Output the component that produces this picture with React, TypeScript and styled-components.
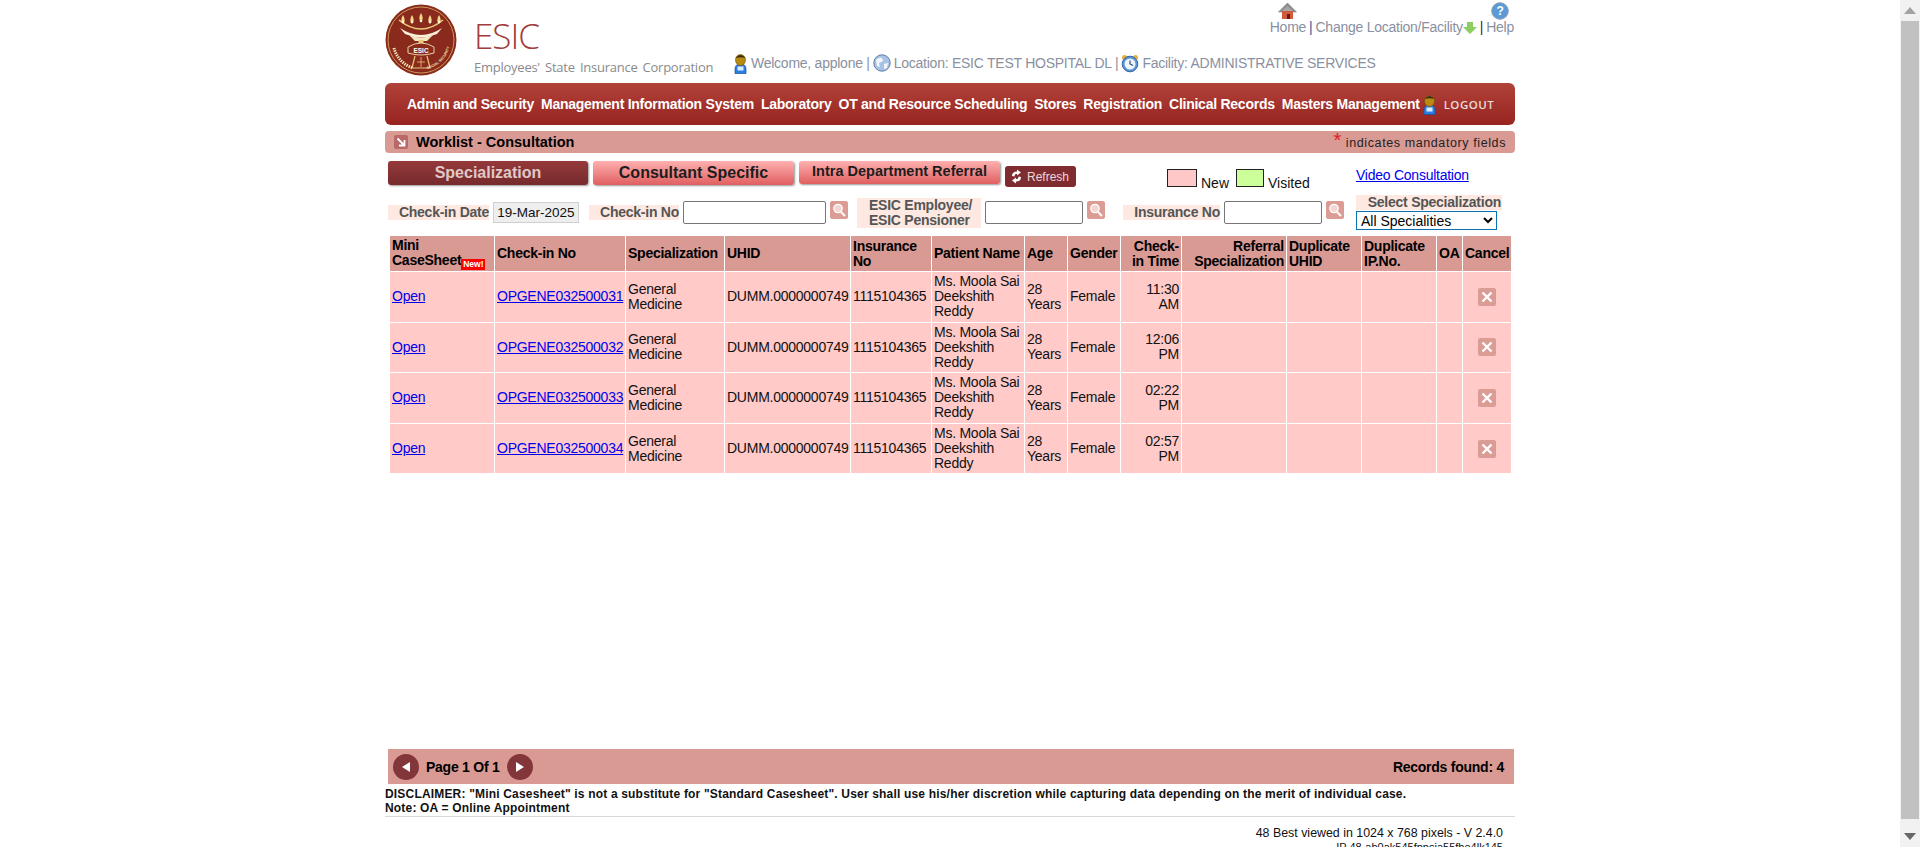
import React from 'react';
import styled, { createGlobalStyle } from 'styled-components';

const GlobalStyle = createGlobalStyle`
  html, body {
    margin: 0;
    padding: 0;
    height: 100%;
    overflow: hidden;
    background: #fff;
    font-family: "Liberation Sans", Arial, sans-serif;
  }
`;

const rows = [
  { no: 'OPGENE032500031', time: '11:30 AM' },
  { no: 'OPGENE032500032', time: '12:06 PM' },
  { no: 'OPGENE032500033', time: '02:22 PM' },
  { no: 'OPGENE032500034', time: '02:57 PM' },
];
const colWidths = [104, 130, 98, 125, 80, 92, 42, 52, 60, 104, 74, 74, 25, 48];
const navItems = [
  'Admin and Security',
  'Management Information System',
  'Laboratory',
  'OT and Resource Scheduling',
  'Stores',
  'Registration',
  'Clinical Records',
  'Masters Management',
];

const Logo = () => (
  <svg width="72" height="72" viewBox="0 0 72 72">
    <circle cx="36" cy="36" r="35.5" fill="#8a2a1c" />
    <circle cx="36" cy="36" r="33" fill="none" stroke="#d9b36a" strokeWidth="0.8" />
    <path d="M14 16 Q36 34 58 16" fill="none" stroke="#e8c878" strokeWidth="1.6" />
    {[18, 27, 36, 45, 54].map((x, i) => (
      <g key={x}>
        <path d={`M${x} ${i === 2 ? 9 : 11} q3.4 5 0 9 q-3.4 -4 0 -9z`} fill="#f3d68a" />
        <circle cx={x} cy={i === 2 ? 17 : 18} r="1.3" fill="#fff6dc" />
      </g>
    ))}
    <path d="M15 24 Q36 38 57 24 L52 30 Q36 37 20 30z" fill="#f8f0dc" />
    <path d="M24 31 Q36 36 48 31 L42 37 L30 37z" fill="#f6e8c0" />
    <rect x="33.5" y="36" width="5" height="4" fill="#e8c878" />
    <path d="M23 43 Q36 35 49 43 L49 49 Q36 53 23 49z" fill="#8a2a1c" stroke="#f3e3b8" strokeWidth="0.9" />
    <text x="36" y="48.6" textAnchor="middle" fontFamily="Liberation Sans, sans-serif" fontWeight="700" fontSize="6.5" fill="#fff">ESIC</text>
    <path d="M30 52 L27 64 L45 64 L42 52" fill="none" stroke="#e8c878" strokeWidth="1.2" />
    <path d="M36 53 L36 63 M32 58 L40 58" stroke="#e8c878" strokeWidth="0.8" />
    <path id="esicArc" d="M42 65 A30 30 0 0 0 65 40" fill="none" />
    <text fontFamily="Liberation Sans, sans-serif" fontSize="3.6" fontWeight="700" fill="#f3e3b8">
      <textPath href="#esicArc">SOCIAL SECURITY</textPath>
    </text>
    <path d="M9 44 A28 28 0 0 0 28 64" fill="none" stroke="#f3e3b8" strokeWidth="3" strokeDasharray="1.4 1" />
  </svg>
);

const PersonIcon = () => (
  <svg width="15" height="21" viewBox="0 0 15 21">
    <path d="M2 16 Q2 11 7.5 11 Q13 11 13 16 L13 20.5 L2 20.5z" fill="#2b7fe0" stroke="#164f9c" strokeWidth="0.7" />
    <rect x="4.5" y="13.5" width="6" height="4" fill="#dcecff" />
    <ellipse cx="7.5" cy="7" rx="5" ry="5.5" fill="#b98a12" stroke="#6d500a" strokeWidth="0.6" />
    <path d="M2.5 5 Q7.5 -1 12.5 5 Q7.5 3.5 2.5 5z" fill="#3a2a12" />
  </svg>
);

const GlobeIcon = () => (
  <svg width="18" height="18" viewBox="0 0 18 18">
    <circle cx="9" cy="9" r="8.2" fill="#a9c3e6" stroke="#5c7fa8" />
    <path d="M3 6 Q6 3 9 4 L10 7 L6 9 L7 13 L4 12z" fill="#f2f5f9" />
    <path d="M11 10 L15 9 L14 14 L11 15z" fill="#f2f5f9" />
  </svg>
);

const ClockIcon = () => (
  <svg width="18" height="19" viewBox="0 0 18 19">
    <circle cx="3.5" cy="3.5" r="2.5" fill="#e8b23a" />
    <circle cx="14.5" cy="3.5" r="2.5" fill="#e8b23a" />
    <circle cx="9" cy="10" r="7.8" fill="#5a94d6" stroke="#35699f" />
    <circle cx="9" cy="10" r="5.5" fill="#eef4fb" />
    <path d="M9 6.5 L9 10 L12 11.5" fill="none" stroke="#2c4f78" strokeWidth="1.2" />
  </svg>
);

const HomeIcon = () => (
  <svg width="19" height="18" viewBox="0 0 19 18">
    <path d="M4 9 L15 9 L15 17 L4 17z" fill="#d2593a" />
    <rect x="9" y="12" width="3" height="5" fill="#5a2015" />
    <path d="M0.5 10 L9.5 1 L18.5 10 L15.5 10 L9.5 4.5 L3.5 10z" fill="#8d8d8d" stroke="#6e6e6e" strokeWidth="0.5" />
    <path d="M4 9 L9.5 4 L15 9z" fill="#a8a8a8" />
  </svg>
);

const HelpIcon = () => (
  <svg width="18" height="18" viewBox="0 0 18 18">
    <circle cx="9" cy="9" r="8.3" fill="#5b9ad6" stroke="#8aa0b8" />
    <text x="9" y="13" textAnchor="middle" fontFamily="Liberation Sans, sans-serif" fontWeight="700" fontSize="12" fill="#fff">?</text>
  </svg>
);

const DownArrowIcon = () => (
  <svg width="14" height="12" viewBox="0 0 14 12">
    <path d="M4 0 L10 0 L10 5 L14 5 L7 12 L0 5 L4 5z" fill="#8ccf60" />
  </svg>
);

const SearchTile = () => (
  <svg width="18" height="18" viewBox="0 0 18 18">
    <rect width="18" height="18" rx="2" fill="#dc9c96" />
    <circle cx="8" cy="7.5" r="4.2" fill="#f3d6d2" stroke="#fff" strokeWidth="1.2" />
    <path d="M11 11 L15 15" stroke="#fff" strokeWidth="2" />
  </svg>
);

const CancelTile = () => (
  <svg width="18" height="18" viewBox="0 0 18 18">
    <rect width="18" height="18" rx="2" fill="#dc9c96" />
    <path d="M4.5 4.5 L13.5 13.5 M13.5 4.5 L4.5 13.5" stroke="#fff" strokeWidth="2.4" />
  </svg>
);

const CornerTile = () => (
  <svg width="14" height="14" viewBox="0 0 14 14">
    <rect width="14" height="14" rx="2" fill="#b96a68" />
    <path d="M3.5 3.5 L9.5 9.5 M10.5 5 L10.5 10.5 L5 10.5" fill="none" stroke="#fff" strokeWidth="1.8" />
  </svg>
);

const RefreshIcon = () => (
  <svg width="13" height="15" viewBox="0 0 13 15">
    <path d="M2 7 Q2 2.5 7 2.5 L7 0.5 L11 3.5 L7 6.5 L7 4.8 Q4.5 4.8 4.5 7.5z" fill="#fff" />
    <path d="M11 8 Q11 12.5 6 12.5 L6 14.5 L2 11.5 L6 8.5 L6 10.2 Q8.5 10.2 8.5 7.5z" fill="#fff" />
  </svg>
);

const PagerArrow = ({ left }: { left?: boolean }) => (
  <svg width="26" height="26" viewBox="0 0 26 26">
    <circle cx="13" cy="13" r="13" fill="#83363a" />
    <path d={left ? 'M17 8 L17 18 L9 13z' : 'M9 8 L9 18 L17 13z'} fill="#fff" />
  </svg>
);

export default function App() {
  return (
    <Screen>
      <GlobalStyle />
      <Page>
        <Container>
          <Header>
            <LogoBox><Logo /></LogoBox>
            <Brand>
              <BrandName>ESIC</BrandName>
              <BrandFull>Employees' State Insurance Corporation</BrandFull>
            </Brand>
            <UserArea>
              <TopLinks>
                <TopLink><HomeIcon />Home</TopLink>
                <Sep $color="#1d5fa0">|</Sep>
                <FacilityLink>Change Location/Facility<DownArrowIcon /></FacilityLink>
                <Sep $color="#5a1030">|</Sep>
                <TopLink><HelpIcon />Help</TopLink>
              </TopLinks>
              <Welcome>
                <PersonIcon />
                <span>Welcome, applone |</span>
                <GlobeIcon />
                <span>Location: ESIC TEST HOSPITAL DL |</span>
                <ClockIcon />
                <span>Facility: ADMINISTRATIVE SERVICES</span>
              </Welcome>
            </UserArea>
          </Header>

          <Nav>
            {navItems.map((item) => <NavItem key={item}>{item}</NavItem>)}
            <NavUser><PersonIcon /></NavUser>
            <Logout>LOGOUT</Logout>
          </Nav>

          <TitleBar>
            <TitleLeft><CornerTile /><Title>Worklist - Consultation</Title></TitleLeft>
            <Mandatory><Star>*</Star> indicates mandatory fields</Mandatory>
          </TitleBar>

          <Toolbar>
            <Tab $active $w={200} $fs={16}>Specialization</Tab>
            <Tab $w={201} $fs={16}>Consultant Specific</Tab>
            <Tab $w={201} $fs={14.5} $raised>Intra Department Referral</Tab>
            <RefreshButton><RefreshIcon />Refresh</RefreshButton>
            <Legend>
              <LegendBox $bg="#ffc8c8" />
              <LegendText>New</LegendText>
              <LegendBox $bg="#ccff99" $w={28} />
              <LegendText>Visited</LegendText>
            </Legend>
            <VideoLink href="#">Video Consultation</VideoLink>
          </Toolbar>

          <Filters>
            <FilterLabel $w={101}>Check-in Date</FilterLabel>
            <DateBox>19-Mar-2025</DateBox>
            <FilterLabel $w={90} $ml={10}>Check-in No</FilterLabel>
            <TextBox $w={143} />
            <SearchButton><SearchTile /></SearchButton>
            <TallLabel>ESIC Employee/<br />ESIC Pensioner</TallLabel>
            <TextBox $w={98} />
            <SearchButton><SearchTile /></SearchButton>
            <FilterLabel $w={97} $ml={18}>Insurance No</FilterLabel>
            <TextBox $w={98} />
            <SearchButton><SearchTile /></SearchButton>
            <SelectColumn>
              <SelectLabel>Select Specialization</SelectLabel>
              <SpecialitySelect defaultValue="all">
                <option value="all">All Specialities</option>
              </SpecialitySelect>
            </SelectColumn>
          </Filters>

          <TableArea>
            <Table>
              <colgroup>
                {colWidths.map((w, i) => <col key={i} style={{ width: w }} />)}
              </colgroup>
              <thead>
                <tr>
                  <Th>Mini<br /><NoWrap>CaseSheet<NewBadge>New!</NewBadge></NoWrap></Th>
                  <Th>Check-in No</Th>
                  <Th>Specialization</Th>
                  <Th>UHID</Th>
                  <Th>Insurance No</Th>
                  <Th>Patient Name</Th>
                  <Th>Age</Th>
                  <Th>Gender</Th>
                  <Th $right>Check-in Time</Th>
                  <Th $right>Referral Specialization</Th>
                  <Th>Duplicate UHID</Th>
                  <Th>Duplicate IP.No.</Th>
                  <Th>OA</Th>
                  <Th>Cancel</Th>
                </tr>
              </thead>
              <tbody>
                {rows.map((row) => (
                  <tr key={row.no}>
                    <Td><a href="#">Open</a></Td>
                    <Td><a href="#">{row.no}</a></Td>
                    <Td>General Medicine</Td>
                    <Td>DUMM.0000000749</Td>
                    <Td>1115104365</Td>
                    <Td>Ms. Moola Sai Deekshith Reddy</Td>
                    <Td>28 Years</Td>
                    <Td>Female</Td>
                    <Td $right>{row.time}</Td>
                    <Td />
                    <Td />
                    <Td />
                    <Td />
                    <Td $center><CancelTile /></Td>
                  </tr>
                ))}
              </tbody>
            </Table>
          </TableArea>

          <Pager>
            <PagerLeft>
              <PagerArrow left />
              <span>Page 1 Of 1</span>
              <PagerArrow />
            </PagerLeft>
            <span>Records found: 4</span>
          </Pager>

          <Disclaimer>
            DISCLAIMER: "Mini Casesheet" is not a substitute for "Standard Casesheet". User shall use his/her discretion while capturing data depending on the merit of individual case.
            <br />
            Note: OA = Online Appointment
          </Disclaimer>
          <Footer>
            <div>48 Best viewed in 1024 x 768 pixels - V 2.4.0</div>
            <FooterId>IP 48-ab0ak545fppsia55fhe4lk145</FooterId>
          </Footer>
        </Container>
      </Page>
      <Scrollbar>
        <ScrollArrow><svg width="12" height="7" viewBox="0 0 12 7"><path d="M6 0 L12 7 L0 7z" fill="#a3a3a3" /></svg></ScrollArrow>
        <ScrollThumb />
        <ScrollArrow><svg width="12" height="7" viewBox="0 0 12 7"><path d="M0 0 L12 0 L6 7z" fill="#666" /></svg></ScrollArrow>
      </Scrollbar>
    </Screen>
  );
}

const Screen = styled.div`
  display: flex;
  height: 847px;
  overflow: hidden;
`;
const Page = styled.div`
  flex: 1;
  min-width: 0;
  height: 847px;
  overflow: hidden;
`;
const Container = styled.div`
  width: 1130px;
  margin: 0 auto;
`;
const Header = styled.div`
  display: flex;
  height: 83px;
`;
const LogoBox = styled.div`
  width: 71px;
  padding-top: 4px;
`;
const Brand = styled.div`
  width: 259px;
  margin-left: 18px;
  color: #a33c3c;
`;
const BrandName = styled.div`
  font-family: "Open Sans", sans-serif;
  font-size: 35px;
  font-weight: 300;
  line-height: 40px;
  margin-top: 16px;
  letter-spacing: -1px;
`;
const BrandFull = styled.div`
  font-family: "Open Sans", sans-serif;
  font-size: 13px;
  line-height: 18px;
  margin-top: 2px;
  color: #8a8a8a;
  word-spacing: 2px;
  letter-spacing: -0.25px;
  white-space: nowrap;
`;
const UserArea = styled.div`
  flex: 1;
  display: flex;
  flex-direction: column;
  justify-content: space-between;
  color: #8a90a0;
  font-size: 14px;
  letter-spacing: -0.25px;
`;
const TopLinks = styled.div`
  display: flex;
  justify-content: flex-end;
  align-items: flex-end;
  gap: 3px;
  padding: 2px 1px 0 0;
  line-height: 15px;
`;
const TopLink = styled.span`
  display: flex;
  flex-direction: column;
  align-items: center;
`;
const FacilityLink = styled.span`
  display: flex;
  align-items: flex-end;
  svg {
    margin-bottom: 1px;
  }
`;
const Sep = styled.span<{ $color: string }>`
  color: ${(p) => p.$color};
`;
const Welcome = styled.div`
  display: flex;
  align-items: center;
  gap: 3px;
  height: 22px;
  margin-bottom: 9px;
  white-space: nowrap;
`;
const Nav = styled.div`
  display: flex;
  align-items: center;
  gap: 7px;
  height: 42px;
  padding-left: 22px;
  border-radius: 6px;
  background: linear-gradient(180deg, #b04239 0%, #982420 100%);
`;
const NavItem = styled.span`
  color: #fff;
  font-size: 14px;
  font-weight: 700;
  letter-spacing: -0.25px;
  white-space: nowrap;
`;
const NavUser = styled.span`
  display: flex;
  flex-shrink: 0;
  margin-left: -5px;
`;
const Logout = styled.span`
  margin-left: 0;
  font-family: "Open Sans", sans-serif;
  font-size: 11.5px;
  font-weight: 600;
  letter-spacing: 0.5px;
  color: #ecdcdc;
`;
const TitleBar = styled.div`
  display: flex;
  justify-content: space-between;
  align-items: center;
  height: 22px;
  margin-top: 6px;
  padding: 0 9px;
  background: #d99a94;
  border-radius: 4px;
`;
const TitleLeft = styled.div`
  display: flex;
  align-items: center;
  gap: 8px;
`;
const Title = styled.span`
  font-size: 14.5px;
  font-weight: 700;
  color: #000;
`;
const Mandatory = styled.span`
  font-size: 12.5px;
  letter-spacing: 0.6px;
  color: #222;
`;
const Star = styled.span`
  color: #e02020;
  font-size: 20px;
  line-height: 12px;
`;
const Toolbar = styled.div`
  display: flex;
  align-items: flex-start;
  height: 26px;
  margin-top: 8px;
  padding-left: 3px;
`;
const Tab = styled.div<{ $active?: boolean; $w: number; $fs: number; $raised?: boolean }>`
  width: ${(p) => p.$w}px;
  height: ${(p) => (p.$raised ? 23 : 24)}px;
  margin-right: 5px;
  border-radius: 3px;
  text-align: center;
  font-size: ${(p) => p.$fs}px;
  font-weight: 700;
  line-height: ${(p) => (p.$raised ? 20 : 24)}px;
  color: ${(p) => (p.$active ? '#e0c8c8' : '#1d1d1d')};
  background: ${(p) =>
    p.$active
      ? 'linear-gradient(180deg, #95393b 0%, #762a2c 100%)'
      : 'linear-gradient(180deg, #ffb0b0 0%, #e05f60 100%)'};
  box-shadow: 1px 1px 2px #999;
`;
const RefreshButton = styled.div`
  display: flex;
  align-items: center;
  gap: 4px;
  width: 71px;
  height: 21px;
  margin-top: 5px;
  padding-left: 5px;
  box-sizing: border-box;
  border-radius: 3px;
  background: #7f2c30;
  color: #ecd8d8;
  font-size: 12px;
`;
const Legend = styled.div`
  display: flex;
  align-items: flex-start;
  margin-left: 91px;
  width: 189px;
  padding-top: 8px;
`;
const LegendBox = styled.span<{ $bg: string; $w?: number }>`
  width: ${(p) => p.$w ?? 30}px;
  height: 18px;
  box-sizing: border-box;
  border: 1px solid #222;
  background: ${(p) => p.$bg};
`;
const LegendText = styled.span`
  margin: 6px 7px 0 4px;
  font-size: 14px;
  line-height: 16px;
  color: #111;
`;
const VideoLink = styled.a`
  margin-top: 6px;
  font-size: 14px;
  letter-spacing: -0.25px;
  line-height: 16px;
  color: #0000ee;
`;
const Filters = styled.div`
  display: flex;
  align-items: center;
  height: 35px;
  margin-top: 8px;
  padding-left: 3px;
`;
const FilterLabel = styled.div<{ $w: number; $ml?: number }>`
  width: ${(p) => p.$w}px;
  margin-left: ${(p) => p.$ml ?? 0}px;
  margin-right: 4px;
  background: #fde9e2;
  color: #555;
  font-size: 14px;
  font-weight: 700;
  letter-spacing: -0.25px;
  line-height: 15px;
  text-align: right;
  white-space: nowrap;
`;
const TallLabel = styled.div`
  width: 124px;
  box-sizing: border-box;
  margin: 0 4px 0 9px;
  padding-left: 12px;
  background: #fde9e2;
  color: #555;
  font-size: 14px;
  font-weight: 700;
  letter-spacing: -0.25px;
  line-height: 15px;
  white-space: nowrap;
`;
const DateBox = styled.div`
  width: 86px;
  height: 21px;
  box-sizing: border-box;
  border: 1px solid #d0d0d0;
  background: #eee;
  color: #111;
  font-size: 13.5px;
  line-height: 19px;
  text-align: center;
  white-space: nowrap;
`;
const TextBox = styled.input<{ $w: number }>`
  width: ${(p) => p.$w}px;
  height: 23px;
  box-sizing: border-box;
  border: 1px solid #767676;
  border-radius: 2px;
  background: #fff;
  padding: 0;
`;
const SearchButton = styled.span`
  display: flex;
  margin: 0 0 6px 4px;
`;
const SelectColumn = styled.div`
  width: 146px;
  margin-left: 12px;
`;
const SelectLabel = styled.div`
  background: #fde9e2;
  color: #555;
  font-size: 14px;
  font-weight: 700;
  letter-spacing: -0.25px;
  line-height: 15px;
  text-align: right;
  padding-right: 1px;
  white-space: nowrap;
`;
const SpecialitySelect = styled.select`
  display: block;
  width: 141px;
  height: 19px;
  margin-top: 1px;
  padding: 0;
  box-sizing: border-box;
  border: 1px solid #0a72b0;
  border-radius: 0;
  background: #fff;
  color: #000;
  font-family: "Liberation Sans", Arial, sans-serif;
  font-size: 14px;
`;
const TableArea = styled.div`
  height: 514px;
  margin-top: 6px;
  padding-left: 4px;
`;
const Table = styled.table`
  width: 1123px;
  table-layout: fixed;
  border-collapse: separate;
  border-spacing: 1px;
  margin-top: -1px;
  font-size: 14px;
  letter-spacing: -0.25px;
  line-height: 15px;
  a {
    color: #0000ee;
  }
`;
const Th = styled.th<{ $right?: boolean }>`
  height: 35px;
  padding: 0 2px;
  background: #d99a94;
  color: #000;
  font-weight: 700;
  text-align: ${(p) => (p.$right ? 'right' : 'left')};
  overflow: hidden;
`;
const NoWrap = styled.span`
  white-space: nowrap;
`;
const Td = styled.td<{ $right?: boolean; $center?: boolean }>`
  height: 49.6px;
  padding: 0 2px;
  background: #ffcac8;
  color: #111;
  text-align: ${(p) => (p.$right ? 'right' : p.$center ? 'center' : 'left')};
  overflow: hidden;
  svg {
    display: block;
    margin: 0 auto;
  }
`;
const NewBadge = styled.span`
  display: inline-block;
  background: #f00;
  color: #fff;
  font-size: 8.5px;
  letter-spacing: 0;
  line-height: 11px;
  vertical-align: -2px;
  width: 24px;
  text-align: center;
`;
const Pager = styled.div`
  display: flex;
  justify-content: space-between;
  align-items: center;
  height: 35px;
  margin-left: 3px;
  margin-right: 1px;
  padding: 0 10px 0 5px;
  background: #d99a94;
  color: #000;
  font-size: 14px;
  font-weight: 700;
  letter-spacing: -0.25px;
`;
const PagerLeft = styled.div`
  display: flex;
  align-items: center;
  gap: 7px;
`;
const Disclaimer = styled.div`
  margin-top: 3px;
  padding-bottom: 1px;
  border-bottom: 1px solid #d8d8d8;
  color: #111;
  font-size: 12px;
  font-weight: 700;
  line-height: 14px;
  letter-spacing: 0.18px;
`;
const Footer = styled.div`
  padding: 9px 12px 0 0;
  color: #111;
  font-size: 12.4px;
  line-height: 14px;
  text-align: right;
`;
const FooterId = styled.div`
  font-size: 11px;
  margin-top: 0;
`;
const Scrollbar = styled.div`
  display: flex;
  flex-direction: column;
  width: 20px;
  height: 847px;
  padding: 0 1px;
  box-sizing: border-box;
  background: #f1f1f1;
`;
const ScrollArrow = styled.div`
  display: flex;
  align-items: center;
  justify-content: center;
  height: 21px;
`;
const ScrollThumb = styled.div`
  flex: 1;
  margin-bottom: 7px;
  background: #c1c1c1;
`;
